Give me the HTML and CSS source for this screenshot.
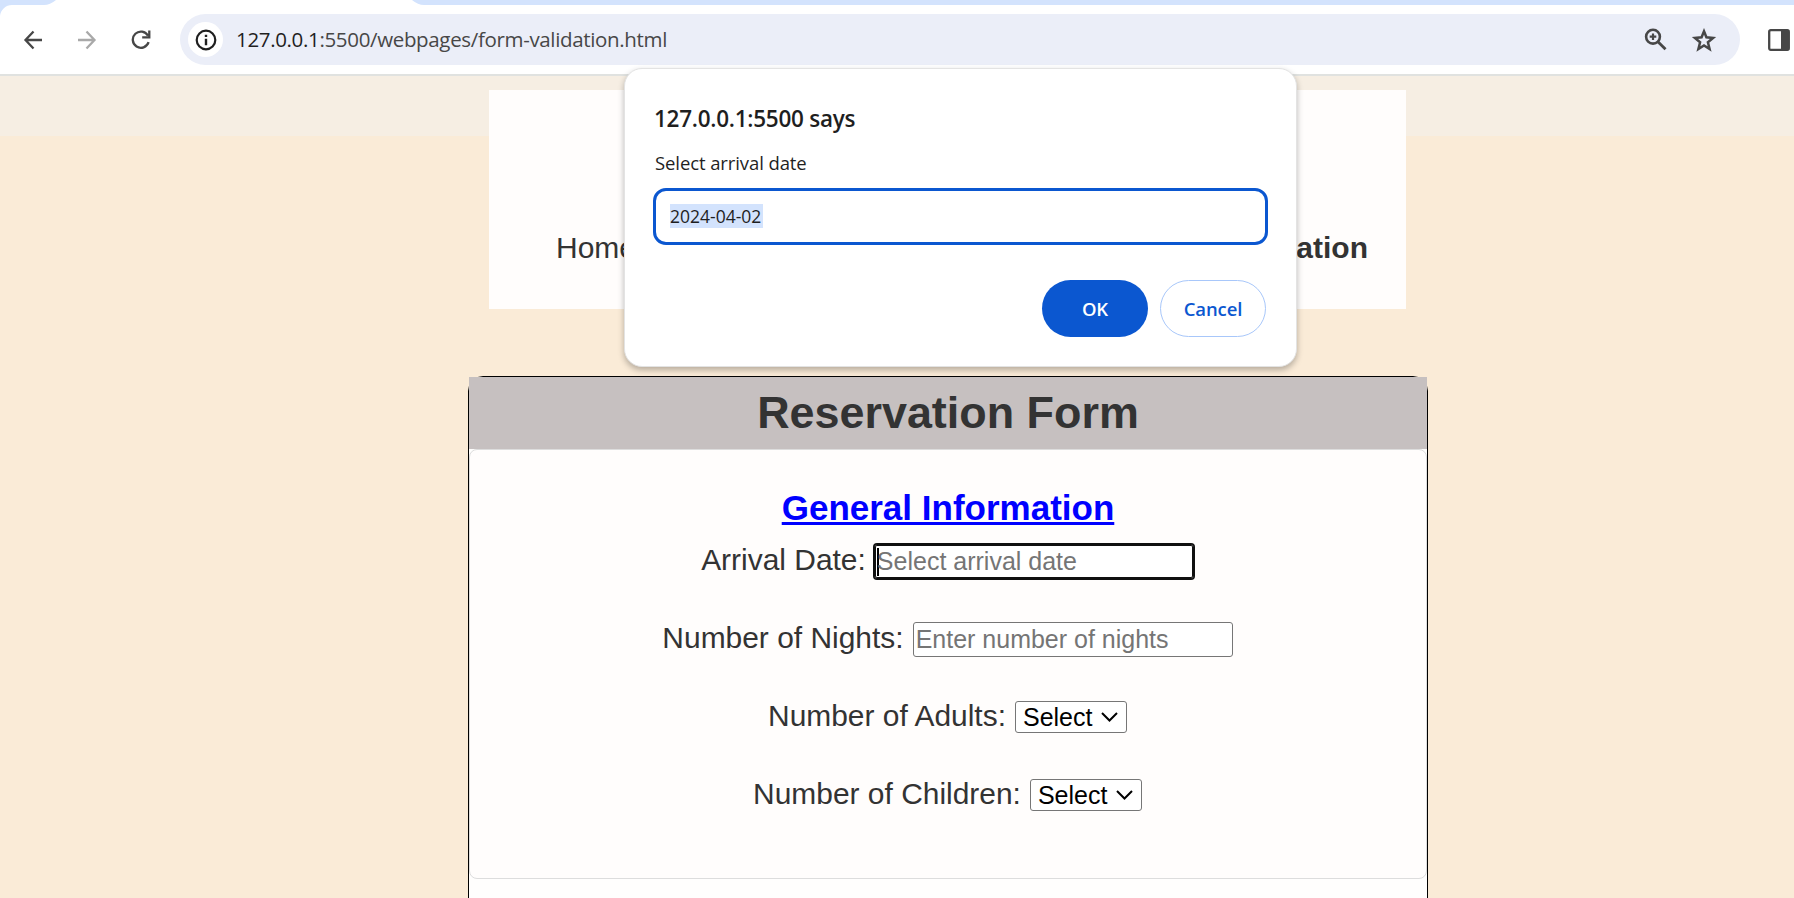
FILE: index.html
```html
<!DOCTYPE html>
<html lang="en">
<head>
<meta charset="utf-8">
<title>Form Validation</title>
<link rel="stylesheet" href="styles.css">
</head>
<body>
<header class="browser">
  <div class="tabstrip">
    <svg width="1794" height="18" viewBox="0 0 1794 18"><path fill="#d3e3fd" d="M0 0H56Q50 5 44 5H12A12 12 0 0 0 0 16ZM412 0H1794V5H424Q418 5 412 0Z"/></svg>
  </div>
  <div class="toolbar">
    <svg class="tool back" viewBox="0 0 20 20"><path d="M19 10H2.500M10.500 1.500 2.500 10l8 8.500"/></svg>
    <svg class="tool forward" viewBox="0 0 20 20"><path d="M1 10H17.500M9.500 1.500 17.500 10l-8 8.500"/></svg>
    <svg class="tool reload" viewBox="0 0 20 20"><path d="M17.600 12.200A8.100 8.100 0 1 1 17 5.800M18.300 .5V7.300H11.200"/></svg>
    <div class="omnibox">
      <span class="info"><svg width="22" height="22" viewBox="0 0 22 22"><circle cx="11" cy="11" r="9.300" fill="none" stroke="#1f1f1f" stroke-width="2.200"/><path fill="#1f1f1f" d="M9.800 5.800h2.400v2.300H9.800zM9.800 9.700h2.400v6.500H9.800z"/></svg></span>
      <span class="url"><span class="host">127.0.0.1</span>:5500/webpages/form-validation.html</span>
      <svg class="zoom" width="23" height="23" viewBox="0 0 23 23"><g fill="none" stroke="#474747"><circle cx="9" cy="8.700" r="6.900" stroke-width="2.600"/><path stroke-width="2.800" d="M13.700 13.500 21.500 21.300"/><path stroke-width="2.200" d="M5.700 8.700h6.600M9 5.400v6.600"/></g></svg>
      <svg class="star" width="26" height="24" viewBox="0 0 26 24"><path fill="none" stroke="#474747" stroke-width="2.500" d="M13 3.300 15.400 9.300 22.100 9.900 16.900 14.300 18.600 21 13 17.500 7.400 21 9.100 14.300 3.900 9.900 10.600 9.300Z"/></svg>
    </div>
    <svg class="panel" width="22" height="22" viewBox="0 0 22 22"><rect x="1.200" y="1.200" width="19.600" height="19.600" rx="1.500" fill="none" stroke="#474747" stroke-width="2.300"/><path fill="#474747" d="M13 1h8v20h-8z"/></svg>
  </div>
</header>
<main class="page">
  <div class="band"></div>
  <nav class="nav"><span>Home</span><b>Form Validation</b></nav>
  <form class="form">
    <h1>Reservation Form</h1>
    <section class="fields">
      <h2>General Information</h2>
      <div class="row"><label>Arrival Date:</label><span class="input focused"><i class="caret"></i>Select arrival date</span></div>
      <div class="row"><label>Number of Nights:</label><span class="input">Enter number of nights</span></div>
      <div class="row"><label>Number of Adults:</label><span class="select">Select<svg width="17" height="10" viewBox="0 0 17 10"><path d="M1 1 8.500 8.500 16 1"/></svg></span></div>
      <div class="row"><label>Number of Children:</label><span class="select">Select<svg width="17" height="10" viewBox="0 0 17 10"><path d="M1 1 8.500 8.500 16 1"/></svg></span></div>
    </section>
  </form>
</main>
<div class="dialog">
  <div class="dialog-title">127.0.0.1:5500 says</div>
  <div class="dialog-message">Select arrival date</div>
  <div class="prompt"><span>2024-04-02</span></div>
  <div class="actions"><span class="btn ok">OK</span><span class="btn cancel">Cancel</span></div>
</div>
</body>
</html>
```
FILE: styles.css
```css
* { box-sizing: border-box; }
html, body { height: 100%; }
body { margin: 0; overflow: hidden; position: relative; background: #faebd7; color: #333; font-family: "Liberation Sans", Arial, sans-serif; }
svg { display: block; flex: none; }

.browser { height: 76px; background: #fff; border-bottom: 2px solid #e0e2e0; font-family: "Open Sans", "Noto Sans", sans-serif; }
.tabstrip { height: 14px; }
.toolbar { display: flex; align-items: center; height: 51px; padding-left: 23px; }
.tool { width: 20px; height: 20px; margin-right: 34px; fill: none; stroke: #474747; stroke-width: 2.3; }
.forward { stroke: #a9a9a9; }
.reload { margin-right: 29px; }
.omnibox { display: flex; align-items: center; width: 1560px; height: 51px; border-radius: 26px; background: #ebeef8; padding-left: 8px; }
.info { display: flex; align-items: center; justify-content: center; width: 35px; height: 35px; border-radius: 50%; background: #fff; }
.url { margin-left: 13px; padding-bottom: 2px; font-size: 20.500px; letter-spacing: -.34px; line-height: 28px; color: #474747; white-space: nowrap; flex: 1; }
.host { color: #1f1f1f; }
.zoom { margin-right: 24px; }
.star { margin-right: 23px; }
.panel { margin-left: 28px; }

.page { height: 822px; overflow: hidden; }
.band { height: 60px; margin-bottom: -46px; background: #f6eee3; }
.nav { display: flex; justify-content: space-between; position: relative; width: 917px; height: 219px; margin: 0 0 67px 489px; padding: 141px 38px 0 67px; background: #fffdfc; font-size: 30px; line-height: 34px; }
.form { width: 960px; height: 560px; margin-left: 468px; border: 1px solid #000; border-radius: 15px; background: #fffefd; }
h1 { margin: 0; height: 72px; padding-top: 1px; background: #c6c0c0; font-size: 44.900px; line-height: 70px; text-align: center; }
.fields { height: 430px; padding-top: 37px; border: 1px solid #ddd; border-radius: 8px; background: #fffdfc; }
h2 { margin: 0; font-size: 35px; line-height: 42px; text-align: center; color: #00f; text-decoration: underline; text-decoration-thickness: 3px; }
.row { display: flex; justify-content: center; gap: 9px; height: 78px; padding-top: 14px; font-size: 29.950px; line-height: 34px; white-space: nowrap; }
label { margin-left: -1px; }
.input { display: flex; width: 320px; height: 35px; margin-top: 1px; padding: 0 2px; border: 1px solid #767676; border-radius: 3px; background: #fff; color: #757575; font-size: 25px; line-height: 33px; }
.focused { margin-left: -1px; border-color: #101010; box-shadow: inset 0 0 0 1px #101010, 0 0 0 1px #101010; }
.caret { width: 2px; height: 28px; margin: 3px -2px 0 0; background: #000; }
.select { display: flex; align-items: center; justify-content: space-between; width: 112px; height: 32px; margin-top: 2px; padding: 0 8px 0 7px; border: 1px solid #767676; border-radius: 3px; background: #fff; color: #000; font-size: 25px; line-height: 30px; }
.select path { fill: none; stroke: #000; stroke-width: 2; }

.dialog { position: absolute; left: 624px; top: 68px; width: 673px; height: 299px; padding: 35px 29px 0; border: 1px solid #e3e3e3; border-radius: 18px; background: #fff; box-shadow: 0 3px 6px rgba(0,0,0,.28); color: #1f1f1f; font-family: "Open Sans", "Noto Sans", sans-serif; }
.dialog-title { font-size: 22.500px; letter-spacing: -.26px; font-weight: 600; line-height: 30px; }
.dialog-message { margin-top: 16px; padding-left: 1px; font-size: 18.500px; letter-spacing: -.1px; line-height: 26px; }
.prompt { display: flex; align-items: center; width: 615px; height: 57px; margin: 12px 0 0 -1px; padding-left: 14px; border: 3px solid #0b57d0; border-radius: 13px; font-size: 17.500px; }
.prompt span { height: 24px; width: 93px; margin-bottom: 2px; line-height: 25px; background: #d3e3fd; white-space: nowrap; }
.actions { display: flex; justify-content: flex-end; gap: 12px; margin: 35px 1px 0 0; }
.btn { width: 106px; height: 57px; border-radius: 29px; font-size: 18.500px; letter-spacing: -.1px; font-weight: 600; line-height: 58px; text-align: center; }
.ok { background: #0b57d0; color: #fff; }
.cancel { border: 1px solid #a8c7fa; color: #0b57d0; line-height: 56px; }
```
